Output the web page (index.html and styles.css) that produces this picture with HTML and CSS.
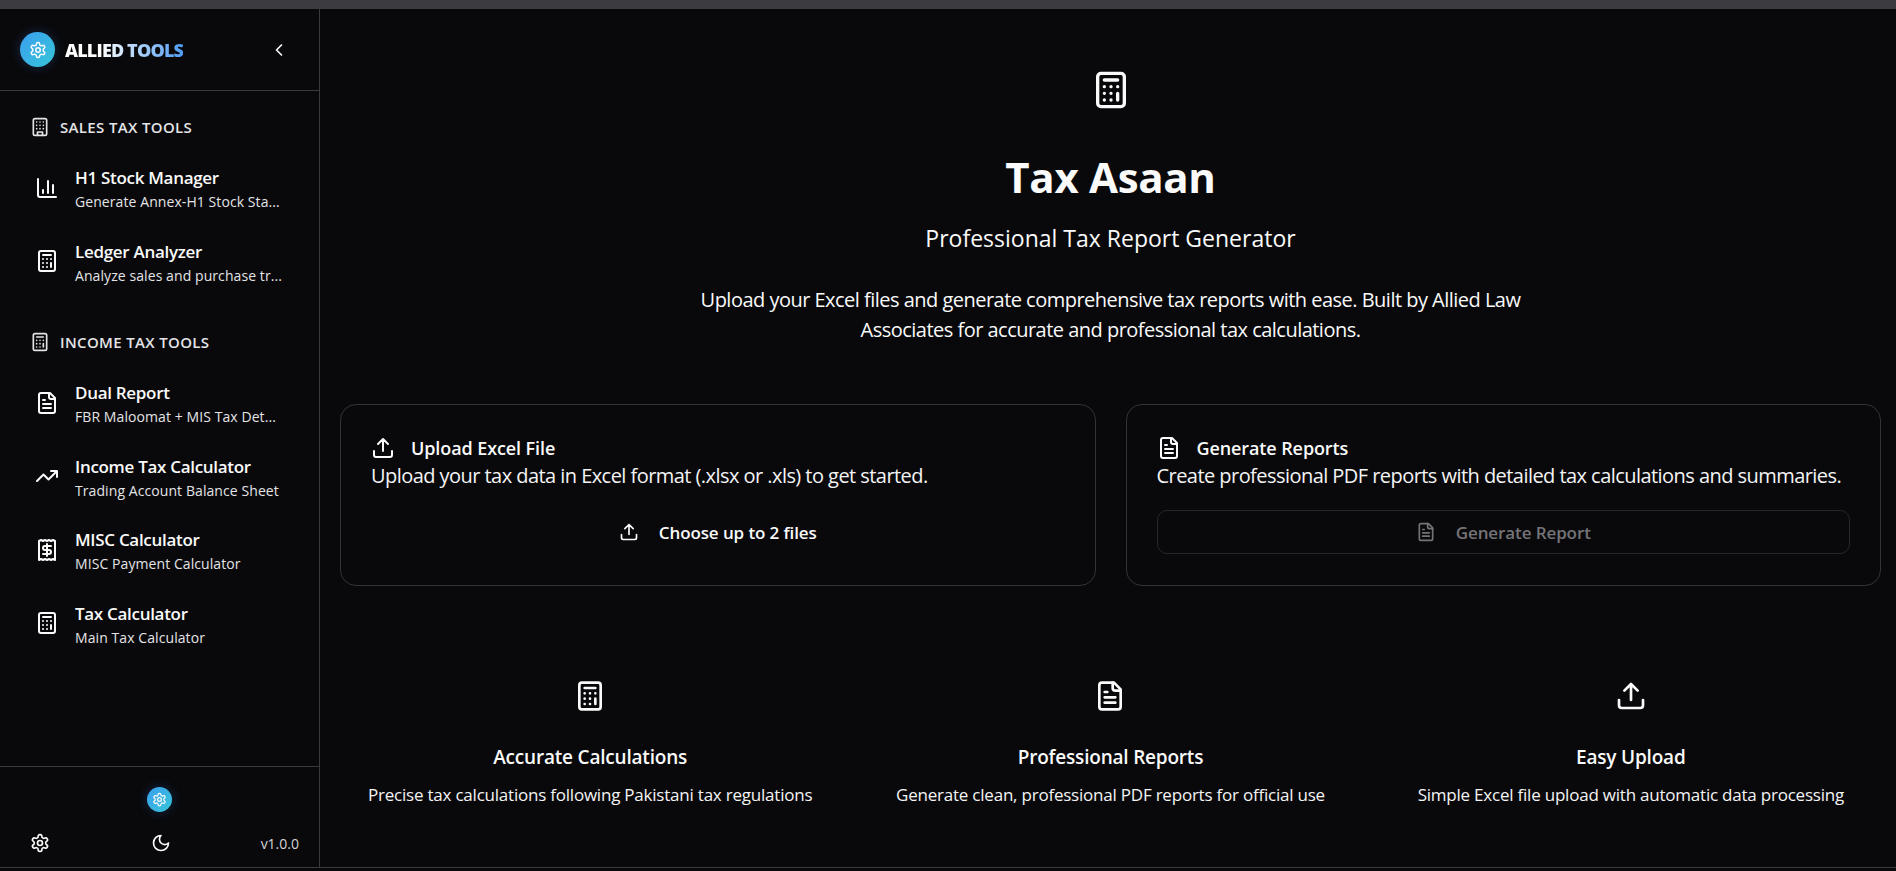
FILE: index.html
```html
<!DOCTYPE html>
<html lang="en">
<head>
    <meta charset="UTF-8">
    <meta name="viewport" content="width=device-width, initial-scale=1.0">
    <title>Tax Asaan</title>
    <link rel="stylesheet" href="styles.css">
</head>
<body>
    <svg class="sprite" aria-hidden="true">
        <symbol id="i-calc" viewBox="0 0 24 24"><rect x="4" y="2" width="16" height="20" rx="2"/><path d="M8 6h8M16 14v4M16 10h.01M12 10h.01M8 10h.01M12 14h.01M8 14h.01M12 18h.01M8 18h.01"/></symbol>
        <symbol id="i-file" viewBox="0 0 24 24"><path d="M15 2H6a2 2 0 0 0-2 2v16a2 2 0 0 0 2 2h12a2 2 0 0 0 2-2V7Z"/><path d="M14 2v4a2 2 0 0 0 2 2h4M10 9H8M16 13H8M16 17H8"/></symbol>
        <symbol id="i-upload" viewBox="0 0 24 24"><path d="M21 15v4a2 2 0 0 1-2 2H5a2 2 0 0 1-2-2v-4M17 8l-5-5-5 5M12 3v12"/></symbol>
        <symbol id="i-gear" viewBox="0 0 24 24"><path d="M12.22 2h-.44a2 2 0 0 0-2 2v.18a2 2 0 0 1-1 1.73l-.43.25a2 2 0 0 1-2 0l-.15-.08a2 2 0 0 0-2.73.73l-.22.38a2 2 0 0 0 .73 2.73l.15.1a2 2 0 0 1 1 1.72v.51a2 2 0 0 1-1 1.74l-.15.09a2 2 0 0 0-.73 2.73l.22.38a2 2 0 0 0 2.73.73l.15-.08a2 2 0 0 1 2 0l.43.25a2 2 0 0 1 1 1.73V20a2 2 0 0 0 2 2h.44a2 2 0 0 0 2-2v-.18a2 2 0 0 1 1-1.73l.43-.25a2 2 0 0 1 2 0l.15.08a2 2 0 0 0 2.73-.73l.22-.39a2 2 0 0 0-.73-2.73l-.15-.08a2 2 0 0 1-1-1.74v-.5a2 2 0 0 1 1-1.74l.15-.09a2 2 0 0 0 .73-2.73l-.22-.38a2 2 0 0 0-2.73-.73l-.15.08a2 2 0 0 1-2 0l-.43-.25a2 2 0 0 1-1-1.73V4a2 2 0 0 0-2-2z"/><circle cx="12" cy="12" r="3"/></symbol>
        <symbol id="i-moon" viewBox="0 0 24 24"><path d="M12 3a6 6 0 0 0 9 9 9 9 0 1 1-9-9Z"/></symbol>
        <symbol id="i-building" viewBox="0 0 24 24"><rect x="4" y="2" width="16" height="20" rx="2"/><path d="M9 22v-4h6v4M8 6h.01M16 6h.01M12 6h.01M12 10h.01M12 14h.01M16 10h.01M16 14h.01M8 10h.01M8 14h.01"/></symbol>
        <symbol id="i-chart" viewBox="0 0 24 24"><path d="M3 3v16a2 2 0 0 0 2 2h16M18 17V9M13 17V5M8 17v-3"/></symbol>
        <symbol id="i-trend" viewBox="0 0 24 24"><path d="M22 7l-8.5 8.5-5-5L2 17M16 7h6v6"/></symbol>
        <symbol id="i-receipt" viewBox="0 0 24 24"><path d="M4 3v19l2-1 2 1 2-1 2 1 2-1 2 1 2-1 2 1V3l-2-1-2 1-2-1-2 1-2-1-2 1-2-1-2 1Z"/><path d="M16 8h-6a2 2 0 1 0 0 4h4a2 2 0 1 1 0 4H8M12 18V6"/></symbol>
        <symbol id="i-left" viewBox="0 0 24 24"><path d="m15 18-6-6 6-6"/></symbol>
    </svg>

    <div class="topbar"></div>
    <div class="app">
        <aside class="sidebar">
            <div class="side-head">
                <div class="brand">
                    <span class="logo"><svg class="icon"><use href="#i-gear"/></svg></span>
                    <span class="brand-name">ALLIED TOOLS</span>
                </div>
                <svg class="icon chevron"><use href="#i-left"/></svg>
            </div>

            <nav class="side-nav">
                <div class="group-title"><svg class="icon"><use href="#i-building"/></svg>SALES TAX TOOLS</div>
                <a class="nav-item">
                    <svg class="icon"><use href="#i-chart"/></svg>
                    <div class="nav-text"><strong>H1 Stock Manager</strong><span>Generate Annex-H1 Stock Sta...</span></div>
                </a>
                <a class="nav-item">
                    <svg class="icon"><use href="#i-calc"/></svg>
                    <div class="nav-text"><strong>Ledger Analyzer</strong><span>Analyze sales and purchase tr...</span></div>
                </a>

                <div class="group-title second"><svg class="icon"><use href="#i-calc"/></svg>INCOME TAX TOOLS</div>
                <a class="nav-item">
                    <svg class="icon"><use href="#i-file"/></svg>
                    <div class="nav-text"><strong>Dual Report</strong><span>FBR Maloomat + MIS Tax Det...</span></div>
                </a>
                <a class="nav-item">
                    <svg class="icon"><use href="#i-trend"/></svg>
                    <div class="nav-text"><strong>Income Tax Calculator</strong><span>Trading Account Balance Sheet</span></div>
                </a>
                <a class="nav-item">
                    <svg class="icon"><use href="#i-receipt"/></svg>
                    <div class="nav-text"><strong>MISC Calculator</strong><span>MISC Payment Calculator</span></div>
                </a>
                <a class="nav-item">
                    <svg class="icon"><use href="#i-calc"/></svg>
                    <div class="nav-text"><strong>Tax Calculator</strong><span>Main Tax Calculator</span></div>
                </a>
            </nav>

            <div class="side-foot">
                <span class="logo small"><svg class="icon"><use href="#i-gear"/></svg></span>
                <div class="foot-row">
                    <svg class="icon"><use href="#i-gear"/></svg>
                    <svg class="icon moon"><use href="#i-moon"/></svg>
                    <span class="version">v1.0.0</span>
                </div>
            </div>
        </aside>

        <main class="content">
            <section class="hero">
                <svg class="icon hero-icon"><use href="#i-calc"/></svg>
                <h1>Tax Asaan</h1>
                <h2>Professional Tax Report Generator</h2>
                <p>Upload your Excel files and generate comprehensive tax reports with ease. Built by Allied Law Associates for accurate and professional tax calculations.</p>
            </section>

            <section class="cards">
                <div class="card">
                    <h3><svg class="icon"><use href="#i-upload"/></svg>Upload Excel File</h3>
                    <p>Upload your tax data in Excel format (.xlsx or .xls) to get started.</p>
                    <button class="btn"><svg class="icon"><use href="#i-upload"/></svg>Choose up to 2 files</button>
                </div>
                <div class="card">
                    <h3><svg class="icon"><use href="#i-file"/></svg>Generate Reports</h3>
                    <p>Create professional PDF reports with detailed tax calculations and summaries.</p>
                    <button class="btn disabled"><svg class="icon"><use href="#i-file"/></svg>Generate Report</button>
                </div>
            </section>

            <section class="features">
                <div class="feature">
                    <svg class="icon"><use href="#i-calc"/></svg>
                    <h4>Accurate Calculations</h4>
                    <p>Precise tax calculations following Pakistani tax regulations</p>
                </div>
                <div class="feature">
                    <svg class="icon"><use href="#i-file"/></svg>
                    <h4>Professional Reports</h4>
                    <p>Generate clean, professional PDF reports for official use</p>
                </div>
                <div class="feature">
                    <svg class="icon"><use href="#i-upload"/></svg>
                    <h4>Easy Upload</h4>
                    <p>Simple Excel file upload with automatic data processing</p>
                </div>
            </section>
        </main>
    </div>
</body>
</html>
```

FILE: styles.css
```css
* {
    margin: 0;
    padding: 0;
    box-sizing: border-box;
}
html, body {
    height: 100%;
    overflow: hidden;
}
body {
    font-family: "Open Sans", "Noto Sans", sans-serif;
    background-color: #09090b;
    color: #fafafa;
    display: flex;
    flex-direction: column;
}
.sprite {
    display: none;
}
.icon {
    width: 24px;
    height: 24px;
    flex-shrink: 0;
    fill: none;
    stroke: currentColor;
    stroke-width: 2;
    stroke-linecap: round;
    stroke-linejoin: round;
}
.topbar {
    height: 9px;
    background-color: #3b3b40;
}
.app {
    flex-grow: 1;
    display: flex;
    min-height: 0;
    margin-bottom: 3px;
    border-bottom: 1px solid #3a3a3e;
}

/* sidebar */
.sidebar {
    width: 320px;
    flex-shrink: 0;
    display: flex;
    flex-direction: column;
    border-right: 1px solid #3a3a3e;
}
.side-head {
    height: 82px;
    flex-shrink: 0;
    display: flex;
    align-items: center;
    justify-content: space-between;
    padding: 0 30px 0 20px;
    border-bottom: 1px solid #3a3a3e;
}
.brand {
    display: flex;
    align-items: center;
    gap: 10px;
}
.logo {
    width: 35px;
    height: 35px;
    border-radius: 50%;
    display: flex;
    align-items: center;
    justify-content: center;
    background: linear-gradient(135deg, #3b9eef, #36c6d8);
    box-shadow: 0 0 12px rgba(59, 130, 246, .25);
}
.logo .icon {
    width: 18px;
    height: 18px;
}
.logo.small {
    width: 25px;
    height: 25px;
}
.logo.small .icon {
    width: 15px;
    height: 15px;
}
.brand-name {
    font-size: 18px;
    font-weight: 800;
    letter-spacing: -.85px;
    background: linear-gradient(90deg, #ffffff 30%, #4f9cf5);
    -webkit-background-clip: text;
    background-clip: text;
    color: transparent;
}
.chevron {
    width: 20px;
    height: 20px;
}
.side-nav {
    flex-grow: 1;
    padding-top: 25px;
}
.group-title {
    display: flex;
    align-items: center;
    gap: 10px;
    height: 22px;
    padding-left: 30px;
    font-size: 15px;
    font-weight: 600;
    letter-spacing: .35px;
    color: #e4e4e7;
    margin-bottom: 13px;
}
.group-title .icon {
    width: 20px;
    height: 20px;
}
.group-title.second {
    margin-top: 33px;
}
.nav-item {
    display: flex;
    align-items: center;
    gap: 16px;
    height: 73.5px;
    padding-left: 35px;
}
.nav-text {
    display: flex;
    flex-direction: column;
    gap: 4px;
    padding-top: 3px;
}
.nav-text strong {
    font-size: 17px;
    line-height: 22px;
    font-weight: 600;
    letter-spacing: -.3px;
}
.nav-text span {
    font-size: 14px;
    line-height: 18px;
    letter-spacing: .08px;
    color: #e4e4e7;
}
.side-foot {
    height: 101px;
    flex-shrink: 0;
    border-top: 1px solid #3a3a3e;
    padding: 20px 20px 0;
    display: flex;
    flex-direction: column;
    align-items: center;
}
.foot-row {
    width: 100%;
    display: grid;
    grid-template-columns: 1fr auto 1fr;
    align-items: center;
    padding-left: 10px;
    margin-top: 21px;
}
.foot-row .icon {
    width: 20px;
    height: 20px;
}
.foot-row .moon {
    margin-right: 8px;
}
.version {
    justify-self: end;
    font-size: 14px;
    font-weight: 500;
    color: #d4d4d8;
}

/* main */
.content {
    flex-grow: 1;
    min-width: 0;
    padding: 61px 15px 0 20px;
}
.hero {
    text-align: center;
}
.hero-icon {
    width: 40px;
    height: 40px;
    display: block;
    margin: 0 auto;
}
.hero h1 {
    font-size: 42px;
    line-height: 52px;
    font-weight: 700;
    letter-spacing: -.3px;
    margin-top: 41px;
}
.hero h2 {
    font-size: 23px;
    line-height: 32px;
    font-weight: 400;
    margin-top: 19px;
}
.hero p {
    font-size: 20px;
    line-height: 30px;
    max-width: 830px;
    margin: 31px auto 0;
    letter-spacing: -.52px;
}
.cards {
    display: grid;
    grid-template-columns: 1fr 1fr;
    gap: 30px;
    margin-top: 59px;
}
.card {
    height: 182px;
    padding: 29px 30px 0;
    border: 1px solid #333338;
    border-radius: 16px;
}
.card h3 {
    display: flex;
    align-items: center;
    gap: 16px;
    font-size: 18px;
    line-height: 28px;
    font-weight: 600;
    letter-spacing: -.1px;
}
.card p {
    font-size: 20px;
    line-height: 28px;
    letter-spacing: -.55px;
    color: #f4f4f5;
}
.btn {
    width: 100%;
    height: 44px;
    margin-top: 20px;
    display: flex;
    align-items: center;
    justify-content: center;
    gap: 20px;
    font-family: inherit;
    font-size: 17px;
    font-weight: 600;
    letter-spacing: -.1px;
    color: #fafafa;
    background: none;
    border: 1px solid transparent;
    border-radius: 10px;
}
.btn .icon {
    width: 20px;
    height: 20px;
}
.btn.disabled {
    color: #747478;
    border-color: #27272a;
}
.features {
    display: grid;
    grid-template-columns: repeat(3, 1fr);
    gap: 20px;
    margin-top: 94px;
    text-align: center;
}
.feature .icon {
    width: 32px;
    height: 32px;
    display: block;
    margin: 0 auto;
}
.feature h4 {
    font-size: 19px;
    line-height: 28px;
    font-weight: 600;
    letter-spacing: -.2px;
    margin-top: 31px;
}
.feature p {
    font-size: 17px;
    line-height: 24px;
    letter-spacing: -.22px;
    margin-top: 12px;
    color: #f4f4f5;
}
```
